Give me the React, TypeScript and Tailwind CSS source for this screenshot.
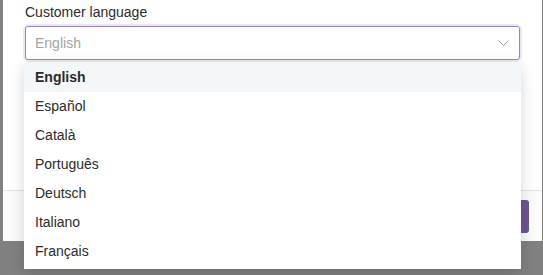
import React from 'react';

const languages = ['English', 'Español', 'Català', 'Português', 'Deutsch', 'Italiano', 'Français'];

export default function App() {
  const selected = 'English';

  return (
    <div
      className="h-[275px] w-[543px] overflow-hidden bg-[#808080] pl-[3px]"
      style={{ fontFamily: '"Helvetica Neue", "Liberation Sans", Arial, sans-serif' }}
    >
      {/* Modal */}
      <div className="relative flex h-[241px] w-[539px] flex-col bg-white">
        <div className="flex-1 px-[22px] pt-[3px]">
          <label className="block text-[14px] font-medium leading-[18px] text-[#2b2b2b]">
            Customer language
          </label>
          <div className="mt-[5px] rounded-[4px] shadow-[0_0_0_2px_#ece8f3]">
            <div className="flex h-[34px] items-center justify-between rounded-[3px] border border-[#9a83ba] bg-white pl-[9px] pr-[10px]">
              <span className="text-[14px] text-[#a3a3a3]">English</span>
              <svg width="11" height="7" viewBox="0 0 11 7" fill="none">
                <path d="M0.5 0.5l5 5 5-5" stroke="#999999" strokeWidth="1" />
              </svg>
            </div>
          </div>
        </div>

        {/* Footer */}
        <div className="flex h-[51px] items-start justify-end border-t border-[#e4e4e4] bg-[#fbfbfb] pr-[13px] pt-[9px]">
          <button className="h-[33px] w-[96px] rounded-[3px] bg-[#6f5395] text-[14px] font-medium text-white">
            Save
          </button>
        </div>

        {/* Dropdown menu */}
        <div className="absolute left-[21px] top-[63px] w-[497px] bg-white pb-[3px] shadow-[0_4px_14px_rgba(0,0,0,0.16)]">
          {languages.map((lang) => (
            <div
              key={lang}
              className={`flex h-[29px] items-center px-[11px] text-[14px] text-[#2b2b2b] ${
                lang === selected ? 'bg-[#f4f7fa] font-semibold' : ''
              }`}
            >
              {lang}
            </div>
          ))}
        </div>
      </div>
    </div>
  );
}
